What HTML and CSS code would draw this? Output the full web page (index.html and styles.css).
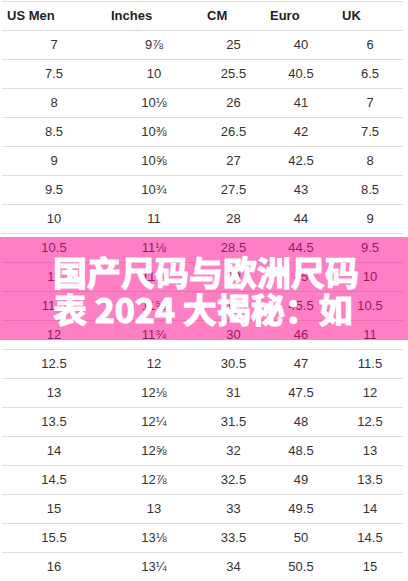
FILE: index.html
```html
<!DOCTYPE html>
<html lang="zh">
<head>
<meta charset="utf-8">
<title>Shoe size chart</title>
<link rel="stylesheet" href="styles.css">
</head>
<body>
<div class="page">
  <table class="chart">
    <colgroup>
      <col class="c1"><col class="c2"><col class="c3"><col class="c4"><col class="c5">
    </colgroup>
    <thead>
      <tr><th>US Men</th><th>Inches</th><th>CM</th><th>Euro</th><th>UK</th></tr>
    </thead>
    <tbody>
      <tr><td>7</td><td>9⅞</td><td>25</td><td>40</td><td>6</td></tr>
      <tr><td>7.5</td><td>10</td><td>25.5</td><td>40.5</td><td>6.5</td></tr>
      <tr><td>8</td><td>10⅛</td><td>26</td><td>41</td><td>7</td></tr>
      <tr><td>8.5</td><td>10⅜</td><td>26.5</td><td>42</td><td>7.5</td></tr>
      <tr><td>9</td><td>10⅝</td><td>27</td><td>42.5</td><td>8</td></tr>
      <tr><td>9.5</td><td>10¾</td><td>27.5</td><td>43</td><td>8.5</td></tr>
      <tr><td>10</td><td>11</td><td>28</td><td>44</td><td>9</td></tr>
      <tr><td>10.5</td><td>11⅛</td><td>28.5</td><td>44.5</td><td>9.5</td></tr>
      <tr><td>11</td><td>11⅜</td><td>29</td><td>45</td><td>10</td></tr>
      <tr><td>11.5</td><td>11⅝</td><td>29.5</td><td>45.5</td><td>10.5</td></tr>
      <tr><td>12</td><td>11¾</td><td>30</td><td>46</td><td>11</td></tr>
      <tr><td>12.5</td><td>12</td><td>30.5</td><td>47</td><td>11.5</td></tr>
      <tr><td>13</td><td>12⅛</td><td>31</td><td>47.5</td><td>12</td></tr>
      <tr><td>13.5</td><td>12¼</td><td>31.5</td><td>48</td><td>12.5</td></tr>
      <tr><td>14</td><td>12⅝</td><td>32</td><td>48.5</td><td>13</td></tr>
      <tr><td>14.5</td><td>12⅞</td><td>32.5</td><td>49</td><td>13.5</td></tr>
      <tr><td>15</td><td>13</td><td>33</td><td>49.5</td><td>14</td></tr>
      <tr><td>15.5</td><td>13⅛</td><td>33.5</td><td>50</td><td>14.5</td></tr>
      <tr><td>16</td><td>13¼</td><td>34</td><td>50.5</td><td>15</td></tr>
    </tbody>
  </table>
  <div class="banner">
    <div class="banner-title">国产尺码与欧洲尺码表 2024 大揭秘：如何准确换算与选择合适的鞋码</div>
  </div>
</div>
</body>
</html>
```

FILE: styles.css
```css
html, body {
  margin: 0;
  padding: 0;
  background: #ffffff;
}

.page {
  position: relative;
  width: 408px;
  height: 581px;
  overflow: hidden;
  padding-top: 1px;
  box-sizing: border-box;
}

.chart {
  margin-left: 2px;
  width: 401px;
  border-collapse: collapse;
  table-layout: fixed;
  font-family: "Liberation Sans", Arial, sans-serif;
  font-size: 13px;
}

.c1 { width: 104px; }
.c2 { width: 96px; }
.c3 { width: 63px; }
.c4 { width: 72px; }
.c5 { width: 66px; }

.chart tr {
  border-top: 1px solid #dddddd;
}

.chart th,
.chart td {
  height: 28px;
  padding: 0;
  line-height: 28px;
}

.chart th {
  text-align: left;
  padding-left: 5px;
  font-weight: bold;
  color: #222222;
}

.chart td {
  text-align: center;
  color: #333333;
}

.banner {
  position: absolute;
  left: 0;
  top: 237px;
  width: 408px;
  height: 103px;
  background: rgba(255, 0, 140, 0.5);
}

.banner-title {
  margin: 16px 0 0 53px;
  width: 312px;
  height: 74px;
  overflow: hidden;
  font-family: "Noto Sans CJK SC", "Noto Sans", sans-serif;
  font-weight: 700;
  font-size: 34px;
  line-height: 37px;
  color: #ffffff;
  -webkit-text-stroke: 1.2px #ffffff;
}
```
